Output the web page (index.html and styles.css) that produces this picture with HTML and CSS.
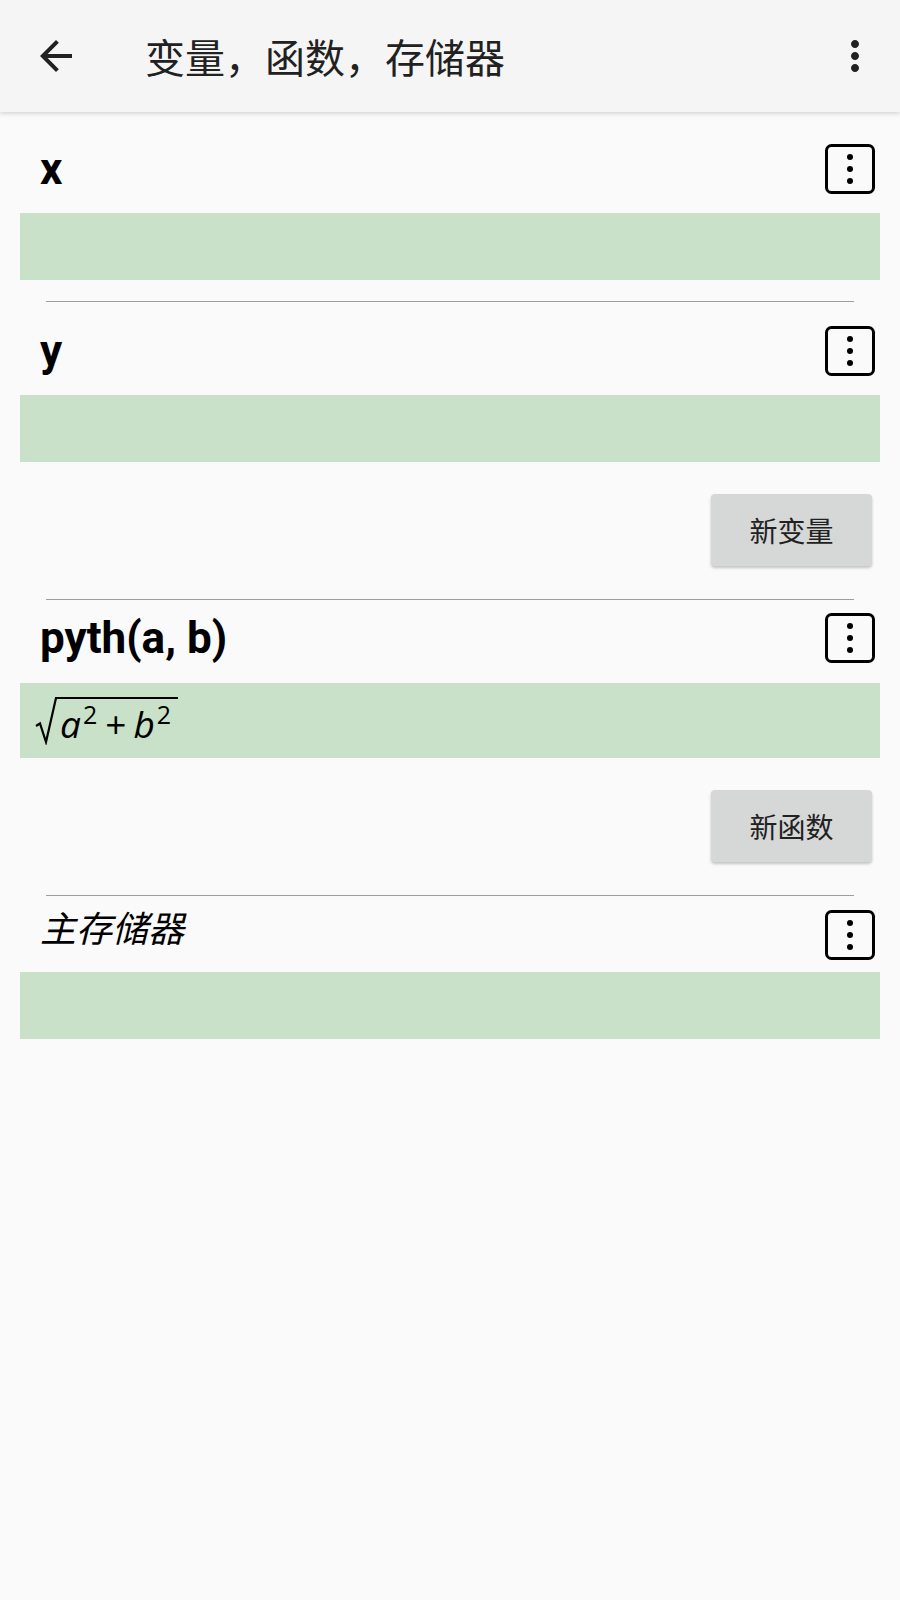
FILE: index.html
```html
<!DOCTYPE html>
<html lang="zh-CN">
<head>
    <meta charset="UTF-8">
    <title>变量，函数，存储器</title>
    <link rel="stylesheet" href="styles.css">
</head>
<body>
    <header class="app-bar">
        <button class="icon-btn back-btn" aria-label="返回">
            <svg width="48" height="48" viewBox="0 0 24 24"><path d="M20 11H7.83l5.59-5.59L12 4l-8 8 8 8 1.41-1.41L7.83 13H20v-2z" fill="#212121"/></svg>
        </button>
        <h1 class="app-title">变量，函数，存储器</h1>
        <button class="icon-btn overflow-btn" aria-label="更多">
            <svg width="48" height="48" viewBox="0 0 24 24"><path d="M12 8c1.1 0 2-.9 2-2s-.9-2-2-2-2 .9-2 2 .9 2 2 2zm0 2c-1.1 0-2 .9-2 2s.9 2 2 2 2-.9 2-2-.9-2-2-2zm0 6c-1.1 0-2 .9-2 2s.9 2 2 2 2-.9 2-2-.9-2-2-2z" fill="#212121"/></svg>
        </button>
    </header>

    <main class="entries">
        <!-- variables -->
        <section class="entry entry-var">
            <div class="entry-head">
                <span class="entry-name">x</span>
                <button class="entry-menu" aria-label="菜单">
                    <svg width="50" height="50" viewBox="0 0 50 50"><rect x="1.5" y="1.5" width="47" height="47" rx="5" fill="none" stroke="#000" stroke-width="3"/><circle cx="25" cy="13" r="3"/><circle cx="25" cy="25" r="3"/><circle cx="25" cy="37" r="3"/></svg>
                </button>
            </div>
            <div class="entry-value"></div>
        </section>
        <hr class="divider">

        <section class="entry entry-var">
            <div class="entry-head">
                <span class="entry-name">y</span>
                <button class="entry-menu" aria-label="菜单">
                    <svg width="50" height="50" viewBox="0 0 50 50"><rect x="1.5" y="1.5" width="47" height="47" rx="5" fill="none" stroke="#000" stroke-width="3"/><circle cx="25" cy="13" r="3"/><circle cx="25" cy="25" r="3"/><circle cx="25" cy="37" r="3"/></svg>
                </button>
            </div>
            <div class="entry-value"></div>
        </section>

        <div class="add-row">
            <button class="add-btn">新变量</button>
        </div>
        <hr class="divider">

        <!-- functions -->
        <section class="entry entry-fn">
            <div class="entry-head">
                <span class="entry-name">pyth(a, b)</span>
                <button class="entry-menu" aria-label="菜单">
                    <svg width="50" height="50" viewBox="0 0 50 50"><rect x="1.5" y="1.5" width="47" height="47" rx="5" fill="none" stroke="#000" stroke-width="3"/><circle cx="25" cy="13" r="3"/><circle cx="25" cy="25" r="3"/><circle cx="25" cy="37" r="3"/></svg>
                </button>
            </div>
            <div class="entry-value formula">
                <div class="sqrt">
                    <svg class="radical" width="24" height="50" viewBox="0 0 24 50"><polyline points="1,31 5,28.5 11,47 21,3 24,3" fill="none" stroke="#000" stroke-width="2.2" stroke-linejoin="miter"/></svg>
                    <span class="radicand"><i>a</i><sup>2</sup><span class="op">+</span><i>b</i><sup>2</sup></span>
                </div>
            </div>
        </section>

        <div class="add-row">
            <button class="add-btn">新函数</button>
        </div>
        <hr class="divider">

        <!-- memory -->
        <section class="entry entry-mem">
            <div class="entry-head">
                <span class="entry-name">主存储器</span>
                <button class="entry-menu" aria-label="菜单">
                    <svg width="50" height="50" viewBox="0 0 50 50"><rect x="1.5" y="1.5" width="47" height="47" rx="5" fill="none" stroke="#000" stroke-width="3"/><circle cx="25" cy="13" r="3"/><circle cx="25" cy="25" r="3"/><circle cx="25" cy="37" r="3"/></svg>
                </button>
            </div>
            <div class="entry-value"></div>
        </section>
    </main>
</body>
</html>
```

FILE: styles.css
```css
body {
    margin: 0;
    background-color: #fafafa;
    font-family: Roboto, "Noto Sans CJK SC", sans-serif;
    color: #000;
}

/* top bar */
.app-bar {
    position: relative;
    height: 112px;
    display: flex;
    align-items: center;
    background-color: #f5f5f5;
    box-shadow: 0 2px 4px rgba(0,0,0,0.14);
}
.icon-btn {
    width: 48px;
    height: 48px;
    padding: 0;
    border: none;
    background: none;
    display: flex;
}
.back-btn {
    margin-left: 32px;
}
.app-title {
    flex: 1;
    margin: 0 0 0 65px;
    font-family: "Noto Sans CJK SC", sans-serif;
    font-size: 40px;
    font-weight: normal;
    color: #212121;
}
.overflow-btn {
    margin-right: 21px;
}

/* list of entries */
.entries {
    padding-top: 8px;
}
.entry-head {
    display: flex;
    align-items: center;
    justify-content: space-between;
    padding: 0 25px 0 40px;
    box-sizing: border-box;
}
.entry-name {
    font-size: 44px;
    font-weight: bold;
}
.entry-menu {
    width: 50px;
    height: 50px;
    padding: 0;
    border: none;
    background: none;
    display: flex;
}
.entry-value {
    margin: 0 20px;
    height: 67px;
    background-color: #c8e1c8;
}

.entry-var .entry-head {
    height: 93px;
    padding-top: 24px;
    padding-bottom: 19px;
}
.entry-fn .entry-head {
    height: 83px;
    padding-top: 13px;
    padding-bottom: 20px;
}
.entry-mem .entry-head {
    height: 76px;
    align-items: flex-start;
    padding-top: 14px;
}
.entry-mem .entry-name {
    font-family: "Noto Sans CJK SC", sans-serif;
    font-size: 36px;
    font-weight: normal;
    font-style: italic;
    line-height: 32px;
}

.divider {
    margin: 21px 46px 0;
    border: none;
    height: 1px;
    background-color: #9e9e9e;
}
.add-row + .divider {
    margin-top: 0;
}

/* buttons under each group */
.add-row {
    display: flex;
    justify-content: flex-end;
    padding: 32px 28px 33px 0;
}
.add-btn {
    width: 161px;
    height: 72px;
    border: none;
    border-radius: 4px;
    background-color: #d6d7d7;
    box-shadow: 0 2px 3px rgba(0,0,0,0.22);
    font-family: "Noto Sans CJK SC", sans-serif;
    font-size: 28px;
    color: #212121;
}

/* function body */
.formula {
    height: 75px;
    padding-left: 15px;
}
.sqrt {
    display: inline-flex;
    align-items: flex-start;
    margin-top: 12px;
}
.radicand {
    margin-top: 2px;
    border-top: 2px solid #000;
    padding: 3px 7px 0 1px;
    font-family: "Open Sans", sans-serif;
    font-size: 37px;
    line-height: 44px;
}
.radicand i {
    font-style: italic;
}
.radicand sup {
    font-size: 25px;
    vertical-align: 14px;
    line-height: 0;
    margin-left: 2px;
}
.radicand .op {
    margin: 0 7px 0 8px;
}
```
